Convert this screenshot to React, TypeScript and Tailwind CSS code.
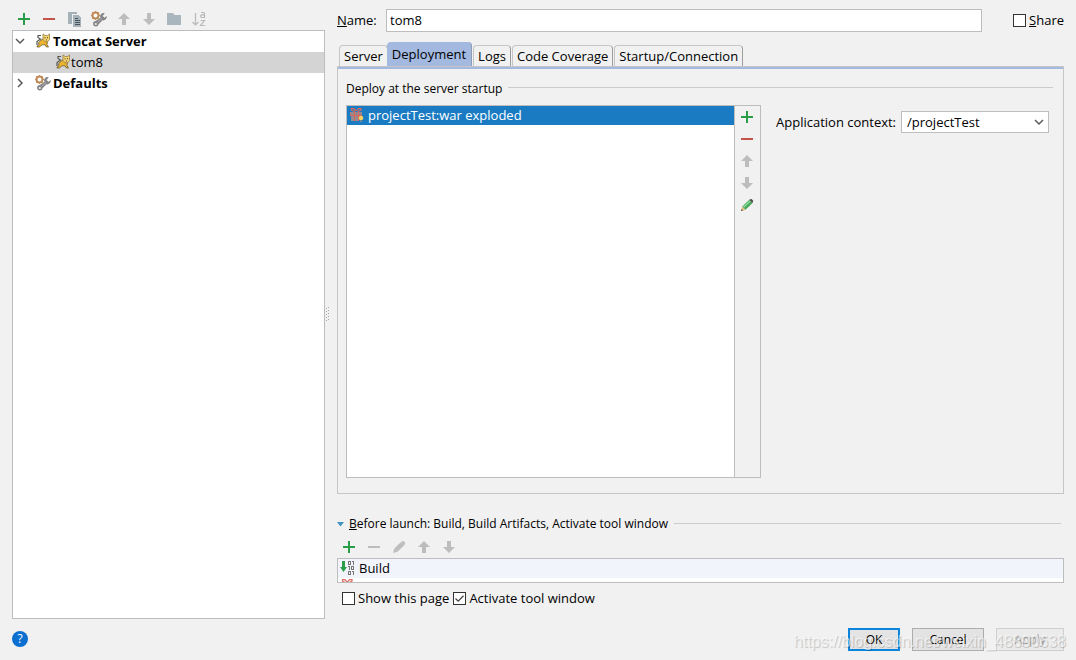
import { useState } from 'react';
import type { ReactNode } from 'react';

interface IconProps {
  className?: string;
}

interface IconButtonProps {
  label: string;
  disabled?: boolean;
  className?: string;
  children: ReactNode;
}

interface CheckFieldProps {
  id: string;
  defaultChecked?: boolean;
  children: ReactNode;
}

const GREEN = '#2a9d49';
const RED = '#c4534b';
const GREY = '#bdbdbd';

function AddIcon() {
  return (
    <svg width="16" height="16" viewBox="0 0 16 16" shapeRendering="crispEdges">
      <path d="M7 2h2v5h5v2H9v5H7V9H2V7h5z" fill={GREEN} />
    </svg>
  );
}

function RemoveIcon({ color = RED }: { color?: string }) {
  return (
    <svg width="16" height="16" viewBox="0 0 16 16" shapeRendering="crispEdges">
      <path d="M2 7h12v2H2z" fill={color} />
    </svg>
  );
}

function UpIcon() {
  return (
    <svg width="16" height="16" viewBox="0 0 16 16">
      <path d="M8 2l6 6h-4v6H6V8H2z" fill={GREY} />
    </svg>
  );
}

function DownIcon() {
  return (
    <svg width="16" height="16" viewBox="0 0 16 16">
      <path d="M8 14l6-6h-4V2H6v6H2z" fill={GREY} />
    </svg>
  );
}

function CopyIcon() {
  return (
    <svg width="16" height="16" viewBox="0 0 16 16" shapeRendering="crispEdges">
      <path d="M2 1h9v2H6v10H2z" fill="#a5b2b9" />
      <path d="M7 4h5l3 3v9H7z" fill="#a5b2b9" />
      <path d="M9 7h3v1H9zM9 9h5v1H9zM9 11h5v1H9zM9 13h5v1H9z" fill="#4a5358" />
    </svg>
  );
}

function WrenchIcon({ className }: IconProps) {
  return (
    <svg width="16" height="16" viewBox="0 0 16 16" className={className}>
      <circle cx="4.5" cy="4.5" r="3" fill="#fff" stroke="#c08a57" strokeWidth="2" />
      <path d="M4.5 0v1.5M4.5 7.500V9M0 4.500h1.500M7.500 4.500H9M1.300 1.300l1 1M6.700 6.700l1 1M7.700 1.300l-1 1M1.300 7.700l1-1" stroke="#c08a57" />
      <path
        d="M13.800 2.200a3.400 3.400 0 0 0-4.300 4.600L4.800 10a2.800 2.800 0 1 0 2.800 3.300l3.900-4A3.600 3.600 0 0 0 15.700 5L13.500 6.800 11.600 5z"
        fill="#858585"
      />
      <circle cx="4.800" cy="13" r="1.100" fill="#eee" />
      <path d="M6.500 11.500l4.500-4" stroke="#b8b8b8" strokeWidth="0.900" />
    </svg>
  );
}

function FolderIcon() {
  return (
    <svg width="16" height="16" viewBox="0 0 16 16">
      <path d="M1 2h6l1.500 2H15v10H1z" fill="#aab6bd" />
    </svg>
  );
}

function SortIcon() {
  return (
    <svg width="16" height="16" viewBox="0 0 16 16" fill="none" stroke="#b9b9b9">
      <path d="M4.500 2v12M1.500 11l3 3 3-3" strokeWidth="1.200" />
      <path d="M10 1.500h2.500q1 0 1 1v4H11q-1.300 0-1.300-1.300T11 3.900h2.500M9.500 9.500h4l-4 5h4.500" strokeWidth="1.200" />
    </svg>
  );
}

function CatIcon({ className }: IconProps) {
  return (
    <svg width="16" height="16" viewBox="0 0 16 16" className={className}>
      <path d="M6 2.500H3v2l2.500 1.500L2 8.500V12" fill="none" stroke="#55554f" strokeWidth="1.200" />
      <path
        d="M8 6L5.500 7.500 3.500 10 4 12l-2 1v1h2.500l2.500-2.200h3l1.500 2.200h2L12 11.500l.5-3z"
        fill="#edb52e"
        stroke="#5c4c28"
        strokeWidth="0.700"
      />
      <path d="M8 1l2 1.500h2.500L14.500 1v5.500L12.700 8.800h-2.900L8 6.500z" fill="#f7d571" stroke="#8b7136" strokeWidth="0.700" />
      <path d="M9.500 4.200h1v1h-1zM12 4.200h1v1h-1zM10.800 6.500h1v.9h-1z" fill="#3d3520" />
    </svg>
  );
}

function ArtifactIcon() {
  return (
    <svg width="16" height="16" viewBox="0 0 16 16">
      <path d="M7 4L5 1.700H2.500v1.500L5 4.300M7.500 4l2-2.300H12v1.500L9.500 4.300" fill="none" stroke="#dc6a5f" strokeWidth="1.200" />
      <path d="M1 5h4v3H1zM6 5h3v3H6zM10 5h3v3h-3zM2 9h3v5H2zM6 9h3v5H6z" fill="#94898c" />
      <path d="M5 4h1v10H5zM9 4h1v10H9zM1 8h12v1H1z" fill="#d9655b" />
      <circle cx="12" cy="11" r="2.300" fill="#f4cf62" />
      <path d="M11 13.500h2V15h-2z" fill="#8a8a8a" />
    </svg>
  );
}

function BuildIcon() {
  return (
    <svg width="16" height="16" viewBox="0 0 16 16">
      <path d="M2 1h3v6h2L3.500 12 0 7h2z" fill={GREEN} />
      <g fill="none" stroke="#777" shapeRendering="crispEdges">
        <path d="M8.500 1.500h2v3h-2zM13.500 1v4M12 1.500h1" />
        <path d="M9.500 6v4M8 6.500h1M11.500 6.500h2v3h-2z" />
        <path d="M8.500 11.500h2v3h-2zM13.500 11v4M12 11.500h1" />
      </g>
    </svg>
  );
}

function PencilIcon({ muted }: { muted?: boolean }) {
  return (
    <svg width="16" height="16" viewBox="0 0 16 16">
      <path d="M2 14l1.300-4.500 3.200 3.200z" fill={muted ? GREY : '#e3b878'} />
      <path d="M3.300 9.500L10 3l3.300 3.200-6.800 6.500z" fill={muted ? GREY : '#46a958'} />
      <path d="M10 3q1.500-1.300 2.500-1l1.500 1.500q.4 1.200-.7 2.700z" fill={muted ? GREY : '#4b5a4d'} />
      {!muted && <path d="M4.600 10.300l6.600-6.300" stroke="#95dda0" strokeWidth="1.300" />}
      {!muted && <path d="M2 14l.6-2 1.400 1.400z" fill="#444" />}
    </svg>
  );
}

function ChevronIcon({ className }: IconProps) {
  return (
    <svg width="10" height="10" viewBox="0 0 10 10" fill="none" stroke="#5a5a5a" className={className}>
      <path d="M1 3l4 4 4-4" strokeWidth="1.500" />
    </svg>
  );
}

function IconButton({ label, disabled, className = 'h-5 w-[25px] pr-px', children }: IconButtonProps) {
  return (
    <button type="button" aria-label={label} disabled={disabled} className={`flex items-center justify-center ${className}`}>
      {children}
    </button>
  );
}

function CheckField({ id, defaultChecked, children }: CheckFieldProps) {
  return (
    <div className="flex items-center gap-[3px]">
      <span className="grid">
        <input
          type="checkbox"
          id={id}
          defaultChecked={defaultChecked}
          className="peer col-start-1 row-start-1 size-[13px] appearance-none border border-[#333] bg-white"
        />
        <svg
          width="13"
          height="13"
          viewBox="0 0 13 13"
          className="pointer-events-none invisible col-start-1 row-start-1 peer-checked:visible"
        >
          <path d="M2.500 6.500l2.700 2.700 5.300-5.400" fill="none" stroke="#444" strokeWidth="1.300" />
        </svg>
      </span>
      <label htmlFor={id} className="pb-px">{children}</label>
    </div>
  );
}

function ConfigurationTree() {
  return (
    <aside className="flex w-[313px] shrink-0 flex-col">
      <div className="flex h-[21px] items-start">
        <IconButton label="Add"><AddIcon /></IconButton>
        <IconButton label="Remove"><RemoveIcon /></IconButton>
        <IconButton label="Copy"><CopyIcon /></IconButton>
        <IconButton label="Edit defaults"><WrenchIcon /></IconButton>
        <IconButton label="Move up" disabled><UpIcon /></IconButton>
        <IconButton label="Move down" disabled><DownIcon /></IconButton>
        <IconButton label="New folder"><FolderIcon /></IconButton>
        <IconButton label="Sort" disabled><SortIcon /></IconButton>
      </div>
      <ul className="flex-1 border border-[#bdbdbd] bg-white">
        <li>
          <div className="flex h-[21px] items-center pb-px pl-0.5 font-bold">
            <ChevronIcon className="mr-2.5" />
            <CatIcon className="mr-0.5" />
            Tomcat Server
          </div>
          <ul>
            <li className="flex h-[21px] items-center bg-[#d4d4d4] pb-px pl-[42px]">
              <CatIcon />
              tom8
            </li>
          </ul>
        </li>
        <li className="flex h-[21px] items-center pb-px pl-0.5 font-bold">
          <ChevronIcon className="mr-2.5 -rotate-90" />
          <WrenchIcon className="mr-0.5" />
          Defaults
        </li>
      </ul>
    </aside>
  );
}

const TABS = ['Server', 'Deployment', 'Logs', 'Code Coverage', 'Startup/Connection'];

function TabBar() {
  const [active, setActive] = useState('Deployment');

  return (
    <div role="tablist" className="flex h-6 items-end gap-px pl-0.5">
      {TABS.map((tab) => (
        <button
          key={tab}
          type="button"
          role="tab"
          aria-selected={tab === active}
          onClick={() => setActive(tab)}
          className={
            tab === active
              ? '-ml-0.5 h-6 rounded-t-sm border-r border-[#8e9cb5] bg-[#a3b9e0] px-[5px]'
              : 'h-[21px] rounded-t-sm border border-b-0 border-[#c6c6c6] border-r-[#9c9c9c] px-1'
          }
        >
          {tab}
        </button>
      ))}
    </div>
  );
}

function DeploymentPanel() {
  return (
    <section className="flex min-h-0 flex-1 flex-col border border-[#c6c6c6] pr-2.5 pb-[15px] pl-2">
      <div className="-mr-2.5 -ml-2 h-0.5 bg-[#a3b9e0]" />
      <div className="flex h-9 items-center gap-1.5 pt-1 text-xs">
        <h2>Deploy at the server startup</h2>
        <span className="mb-1 h-px flex-1 bg-[#cbcbcb]" />
      </div>
      <div className="flex min-h-0 flex-1 gap-[15px]">
        <div className="flex w-[415px] border border-[#bdbdbd]">
          <ul className="flex-1 bg-white">
            <li className="flex h-[19px] items-center gap-[3px] bg-[#1a7bc3] pb-px pl-0.5 text-white">
              <ArtifactIcon />
              projectTest:war exploded
            </li>
          </ul>
          <div className="flex w-[26px] flex-col border-l border-[#bdbdbd]">
            <IconButton label="Add artifact" className="h-[22px] pr-px"><AddIcon /></IconButton>
            <IconButton label="Remove artifact" className="h-[22px] pr-px"><RemoveIcon /></IconButton>
            <IconButton label="Move artifact up" className="h-[22px] pr-px" disabled><UpIcon /></IconButton>
            <IconButton label="Move artifact down" className="h-[22px] pr-px" disabled><DownIcon /></IconButton>
            <IconButton label="Edit artifact" className="h-[22px] pr-px"><PencilIcon /></IconButton>
          </div>
        </div>
        <div className="mt-1.5 flex h-[22px] flex-1 items-center justify-between pr-1">
          <label htmlFor="context" className="pb-px">Application context:</label>
          <div className="grid w-[148px] items-center">
            <select
              id="context"
              className="col-start-1 row-start-1 h-[22px] appearance-none border border-[#bdbdbd] bg-white pb-px pl-[5px]"
            >
              <option>/projectTest</option>
            </select>
            <ChevronIcon className="pointer-events-none col-start-1 row-start-1 mr-[5px] justify-self-end" />
          </div>
        </div>
      </div>
    </section>
  );
}

function BeforeLaunch() {
  return (
    <section className="mt-5 pb-[5px]">
      <div className="flex h-5 items-center gap-1.5 pr-[3px] text-xs">
        <button type="button" className="flex items-center gap-[5px]">
          <svg width="7" height="5" viewBox="0 0 7 5">
            <path d="M0 0h7L3.500 4.500z" fill="#4294c2" />
          </svg>
          <span>
            <u>B</u>efore launch: Build, Build Artifacts, Activate tool window
          </span>
        </button>
        <span className="mb-px h-px flex-1 bg-[#cbcbcb]" />
      </div>
      <div className="flex h-6 items-center pt-0.5">
        <IconButton label="Add task"><AddIcon /></IconButton>
        <IconButton label="Remove task" disabled><RemoveIcon color={GREY} /></IconButton>
        <IconButton label="Edit task" disabled><PencilIcon muted /></IconButton>
        <IconButton label="Move task up" disabled><UpIcon /></IconButton>
        <IconButton label="Move task down" disabled><DownIcon /></IconButton>
      </div>
      <ul className="h-[25px] overflow-hidden border border-[#bdbdbd] bg-white">
        <li className="flex h-[19px] items-center gap-[3px] bg-[#f1f5fb] pb-px pl-0.5">
          <BuildIcon />
          Build
        </li>
        <li className="pl-0.5">
          <ArtifactIcon />
        </li>
      </ul>
      <div className="flex h-[31px] items-center gap-1 pl-[5px]">
        <CheckField id="show-page">Show this page</CheckField>
        <CheckField id="activate-window" defaultChecked>Activate tool window</CheckField>
      </div>
    </section>
  );
}

export default function App() {
  return (
    <div className="relative flex h-screen flex-col bg-[#f1f1f1] px-3 pt-[9px] pb-[9px] font-['Open_Sans','Noto_Sans',sans-serif] text-[13px] leading-4 text-black">
      <div className="flex min-h-0 flex-1">
        <ConfigurationTree />
        <div className="flex w-3 shrink-0 items-center">
          <svg width="6" height="16" viewBox="0 0 6 16" fill="#a8a8a8" shapeRendering="crispEdges">
            <path d="M1 2h1v1H1zM1 5h1v1H1zM1 8h1v1H1zM1 11h1v1H1zM1 14h1v1H1zM3 1h1v1H3zM3 4h1v1H3zM3 7h1v1H3zM3 10h1v1H3zM3 13h1v1H3z" />
          </svg>
        </div>
        <main className="flex min-w-0 flex-1 flex-col">
          <div className="flex items-center">
            <label htmlFor="name" className="w-[49px] pb-px">
              <u>N</u>ame:
            </label>
            <input
              id="name"
              type="text"
              defaultValue="tom8"
              className="mr-[31px] h-[23px] min-w-0 flex-1 border border-[#bdbdbd] bg-white px-[3px] pb-px"
            />
            <CheckField id="share">
              <u>S</u>hare
            </CheckField>
          </div>
          <div className="mt-2.5 flex min-h-0 flex-1 flex-col">
            <TabBar />
            <DeploymentPanel />
          </div>
          <BeforeLaunch />
        </main>
      </div>
      <footer className="mt-[9px] flex h-[23px] items-center gap-3">
        <button type="button" aria-label="Help" className="mr-auto mb-0.5 size-4 rounded-full bg-[#0b6fcf] text-xs leading-4 text-white">
          ?
        </button>
        <button type="button" className="h-[23px] w-[52px] border-2 border-[#0b84dc] bg-[#e4e4e4] text-xs">
          OK
        </button>
        <button type="button" className="h-[23px] w-[72px] border border-[#adadad] bg-[#e3e3e3] text-xs">
          Cancel
        </button>
        <button type="button" disabled className="h-[23px] w-[68px] border border-[#cfcfcf] bg-[#ebebeb] text-xs text-[#a8a8a8]">
          Apply
        </button>
      </footer>
      <p className="pointer-events-none absolute right-2.5 bottom-2 font-['Liberation_Sans',sans-serif] text-base leading-5 text-white/60 [text-shadow:1px_1px_1px_rgba(0,0,0,0.2)]">
        https://blog.csdn.net/weixin_48890638
      </p>
    </div>
  );
}
